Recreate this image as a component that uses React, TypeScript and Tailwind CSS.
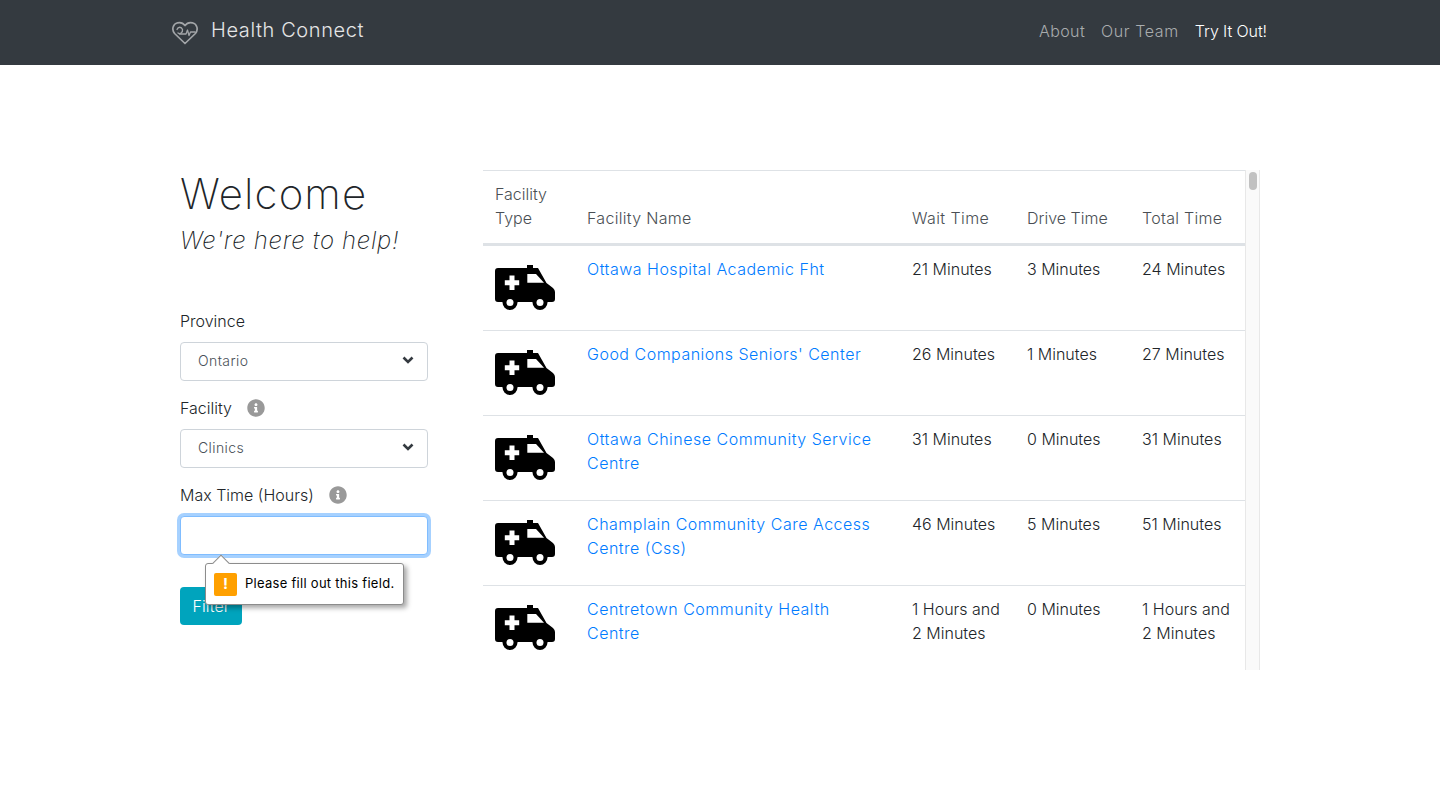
import { FaInfoCircle } from 'react-icons/fa';

const rows = [
  { name: 'Ottawa Hospital Academic Fht', wait: '21 Minutes', drive: '3 Minutes', total: '24 Minutes' },
  { name: "Good Companions Seniors' Center", wait: '26 Minutes', drive: '1 Minutes', total: '27 Minutes' },
  { name: 'Ottawa Chinese Community Service Centre', wait: '31 Minutes', drive: '0 Minutes', total: '31 Minutes' },
  { name: 'Champlain Community Care Access Centre (Css)', wait: '46 Minutes', drive: '5 Minutes', total: '51 Minutes' },
  { name: 'Centretown Community Health Centre', wait: '1 Hours and 2 Minutes', drive: '0 Minutes', total: '1 Hours and 2 Minutes' },
];

function Logo() {
  return (
    <svg width="26" height="24" viewBox="0 0 26 24" fill="none" stroke="#a2a5a8" strokeWidth="1.7" strokeLinejoin="round" strokeLinecap="round">
      <path d="M13 22.5 L2.6 12.5 C-0.6 8.5 0.8 3 5.6 1.8 C8.8 1.1 11.6 2.6 13 4.6 C14.4 2.6 17.2 1.1 20.4 1.8 C25.2 3 26.6 8.5 23.4 12.5 Z" />
      <path d="M5 8.5 C6 5.5 9.5 5.5 10.5 8.5 C11 11.5 8 13.5 6 12" strokeWidth="1.3" />
      <path d="M7.5 13 H14 L15.5 9 L17 14.5 L18.5 11 H23" strokeWidth="1.3" />
    </svg>
  );
}

function Ambulance() {
  return (
    <svg width="60" height="45" viewBox="0 0 60 45" className="mt-[19px] block">
      <rect x="32" y="0" width="6" height="4" fill="#000" />
      <path d="M3 3 H43 L51.5 18 L58 23 Q60 25 60 27 V34 Q60 37 57 37 H3 Q0 37 0 34 V6 Q0 3 3 3 Z" fill="#000" />
      <path d="M32.3 9 H41 L49 17.7 H32.3 Z" fill="#fff" />
      <path d="M14.5 10.5 H19.5 V15.2 H24.2 V20.2 H19.5 V25 H14.5 V20.2 H9.8 V15.2 H14.5 Z" fill="#fff" />
      <circle cx="15" cy="37.5" r="7.5" fill="#000" />
      <circle cx="15" cy="37.5" r="3.5" fill="#fff" />
      <circle cx="45" cy="37.5" r="7.5" fill="#000" />
      <circle cx="45" cy="37.5" r="3.5" fill="#fff" />
    </svg>
  );
}

function SelectField({ value }: { value: string }) {
  return (
    <div className="relative">
      <select
        defaultValue={value}
        className="block h-[39px] w-full appearance-none rounded-[4px] border border-[#ced4da] bg-white pb-[2px] pl-[17px] text-[14px] font-light tracking-[0.4px] text-[#495057]"
      >
        <option>{value}</option>
      </select>
      <svg width="12" height="8" viewBox="0 0 12 8" fill="none" stroke="#343a40" strokeWidth="2.6" className="absolute right-[14px] top-[14px]">
        <path d="M1.5 1.5 L6 6 L10.5 1.5" />
      </svg>
    </div>
  );
}

export default function App() {
  return (
    <div className="min-h-[787px] bg-white text-[#212529]" style={{ fontFamily: 'Inter, sans-serif' }}>
      <nav className="h-[65px] bg-[#343a40]">
        <div className="mx-auto flex h-full w-[1140px] items-center justify-between pl-[22px] pr-[23px]">
          <a className="flex items-center gap-[13px]">
            <Logo />
            <span className="pb-[5px] text-[20px] font-light tracking-[0.6px] text-[#e4e5e6]">Health Connect</span>
          </a>
          <div className="flex gap-[16px] pb-[3px] text-[16px] font-light">
            <a className="tracking-[0.4px] text-[#a9acae]">About</a>
            <a className="tracking-[0.6px] text-[#a9acae]">Our Team</a>
            <a className="tracking-[-0.1px] text-white">Try It Out!</a>
          </div>
        </div>
      </nav>

      <main className="mx-auto flex w-[1140px] pl-[30px] pt-[105px]">
        <aside className="w-[248px] shrink-0">
          <h1 className="text-[42px] leading-[48px] font-extralight tracking-[1.1px]">Welcome</h1>
          <p className="mt-[8px] text-[24px] leading-[29px] font-extralight tracking-[0.7px] italic">We're here to help!</p>

          <label className="mt-[54px] mb-[9px] block text-[16px] leading-[24px] font-light">Province</label>
          <SelectField value="Ontario" />

          <label className="mt-[15px] mb-[9px] flex items-center gap-[15px] text-[16px] leading-[24px] font-light">
            Facility
            <FaInfoCircle className="text-[18px] text-[#999]" />
          </label>
          <SelectField value="Clinics" />

          <label className="mt-[15px] mb-[9px] flex items-center gap-[15px] text-[16px] leading-[24px] font-light">
            Max Time (Hours)
            <FaInfoCircle className="text-[18px] text-[#999]" />
          </label>
          <div className="relative">
            <input className="block h-[39px] w-full rounded-[4px] border border-[#80bdff] bg-white shadow-[0_0_0_3px_rgba(0,123,255,0.35)] outline-none" />
            <div className="absolute left-[25px] top-[47px] z-10 flex h-[42px] w-[199px] items-center gap-[8px] rounded-[3px] border border-[#8c8c8c] bg-white pl-[8px] shadow-[3px_3px_5px_rgba(0,0,0,0.35)]">
              <div className="absolute left-[9px] top-[-7px] h-[12px] w-[12px] rotate-45 border-l border-t border-[#8c8c8c] bg-white" />
              <div className="relative flex h-[23px] w-[23px] items-center justify-center rounded-[2px] bg-[#ffa000] text-[15px] font-bold text-white">!</div>
              <span className="relative text-[13px] tracking-[0.28px] text-black">Please fill out this field.</span>
            </div>
          </div>
          <button className="mt-[32px] h-[38px] w-[62px] rounded-[4px] bg-[#00a4bd] text-[16px] font-light text-white">Filter</button>
        </aside>

        <section className="ml-[55px] flex h-[500px] w-[777px] shrink-0 overflow-hidden">
          <div className="w-[762px] shrink-0 border-t border-[#dee2e6]">
            <table className="w-[762px] table-fixed border-separate border-spacing-0 text-left text-[16px] leading-[24px] font-light">
              <colgroup>
                <col className="w-[92px]" />
                <col className="w-[325px]" />
                <col className="w-[115px]" />
                <col className="w-[115px]" />
                <col className="w-[115px]" />
              </colgroup>
              <thead>
                <tr className="align-bottom text-[#4a4f54]">
                  <th className="border-b-[3px] border-[#dee2e6] px-[12px] pt-[11px] pb-[13px] font-light">Facility Type</th>
                  <th className="border-b-[3px] border-[#dee2e6] px-[12px] pt-[11px] pb-[13px] font-light tracking-[0.3px]">Facility Name</th>
                  <th className="border-b-[3px] border-[#dee2e6] px-[12px] pt-[11px] pb-[13px] font-light tracking-[0.4px]">Wait Time</th>
                  <th className="border-b-[3px] border-[#dee2e6] px-[12px] pt-[11px] pb-[13px] font-light">Drive Time</th>
                  <th className="border-b-[3px] border-[#dee2e6] px-[12px] pt-[11px] pb-[13px] font-light tracking-[0.3px]">Total Time</th>
                </tr>
              </thead>
              <tbody>
                {rows.map((row) => (
                  <tr key={row.name} className="h-[85px] align-top">
                    <td className="border-b border-[#dee2e6] px-[12px]"><Ambulance /></td>
                    <td className="border-b border-[#dee2e6] pl-[12px] pr-[24px] pt-[11px] tracking-[0.5px] text-[#007bff]">{row.name}</td>
                    <td className="border-b border-[#dee2e6] px-[12px] pt-[11px]">{row.wait}</td>
                    <td className="border-b border-[#dee2e6] px-[12px] pt-[11px]">{row.drive}</td>
                    <td className="border-b border-[#dee2e6] px-[12px] pt-[11px]">{row.total}</td>
                  </tr>
                ))}
              </tbody>
            </table>
          </div>
          <div className="w-[15px] shrink-0 border-x border-[#e8e8e8] bg-[#fafafa] pt-[2px] pl-[3px]">
            <div className="h-[18px] w-[8px] rounded-full bg-[#c1c1c1]" />
          </div>
        </section>
      </main>
    </div>
  );
}
